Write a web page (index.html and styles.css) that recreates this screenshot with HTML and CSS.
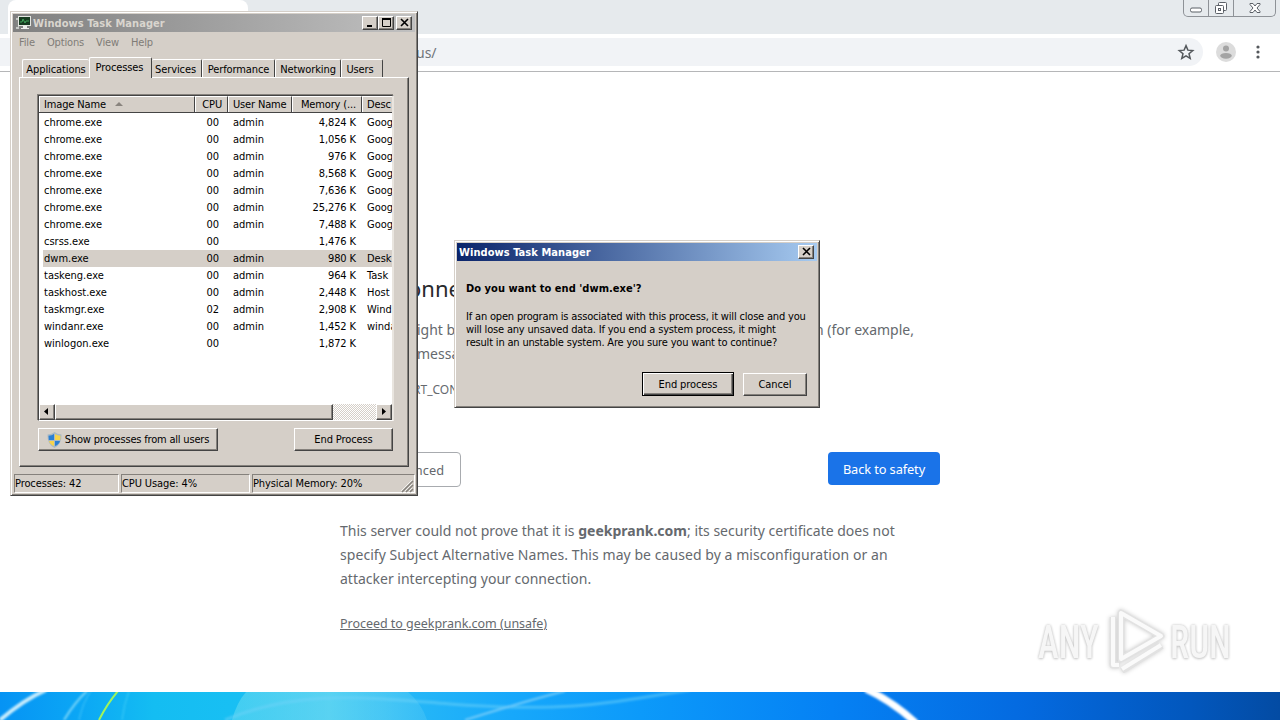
FILE: index.html
```
<!DOCTYPE html>
<html lang="en">
<head>
    <meta charset="UTF-8">
    <title>Windows Task Manager</title>
    <link rel="stylesheet" href="styles.css">
</head>
<body>
    <div class="browser">
        <div class="tab-strip">
            <div class="browser-tab"></div>
            <div class="window-controls">
                <span class="control"><svg width="14" height="8" viewBox="0 0 14 8"><rect x="1.5" y="2" width="11" height="4" rx="1.5" fill="#fff" stroke="#5b6067"/></svg></span>
                <span class="control"><svg width="14" height="14" viewBox="0 0 14 14" fill="#fff" stroke="#5b6067"><rect x="4.500" y="1.500" width="8" height="8" rx="1"/><rect x="1.500" y="4.500" width="8" height="8" rx="1"/><rect x="4.500" y="7.500" width="2" height="2"/></svg></span>
                <span class="control wide"><svg width="14" height="12" viewBox="0 0 14 12"><path d="M2 1.500h3l2 2.500 2-2.500h3v1L9 6l3 3.500v1H9L7 8l-2 2.500H2v-1L5 6 2 2.500z" fill="#fff" stroke="#5b6067"/></svg></span>
            </div>
        </div>
        <div class="toolbar">
            <div class="address-bar">
                <span>us/</span>
                <svg width="18" height="18" viewBox="0 0 24 24"><path d="M12 3.500l2.500 6 6.500.5-5 4.200 1.600 6.300L12 17.100l-5.600 3.400L8 14.200 3 10l6.500-.5z" fill="none" stroke="#54585c" stroke-width="2"/></svg>
            </div>
            <svg class="avatar" width="20" height="20" viewBox="0 0 20 20"><circle cx="10" cy="10" r="10" fill="#dcdcdc"/><circle cx="10" cy="6.500" r="3" fill="#a3a3a3"/><ellipse cx="10" cy="13.800" rx="5.800" ry="2.900" fill="#a3a3a3"/></svg>
            <svg width="4" height="14" viewBox="0 0 4 14" fill="#55585c"><circle cx="2" cy="2" r="1.600"/><circle cx="2" cy="7" r="1.600"/><circle cx="2" cy="12" r="1.600"/></svg>
        </div>
        <div class="page">
            <h1>onne</h1>
            <div class="warning"><span>ight b</span><span class="rest">n (for example,</span></div>
            <div class="warning">messa</div>
            <div class="error-code">RT_CON</div>
            <div class="actions">
                <div class="details-btn">nced</div>
                <div class="safety-btn">Back to safety</div>
            </div>
            <p class="explain">
                <span>This server could not prove that it is <b>geekprank.com</b>; its security certificate does not</span><br>
                <span class="wider">specify Subject Alternative Names. This may be caused by a misconfiguration or an</span><br>
                <span>attacker intercepting your connection.</span>
            </p>
            <a class="proceed">Proceed to geekprank.com (unsafe)</a>
        </div>
        <svg class="wallpaper" width="1280" height="28" viewBox="0 0 1280 28">
            <defs>
                <linearGradient id="sky" x1="0" x2="1" y1="0" y2="0">
                    <stop offset="0" stop-color="#0693f4"/>
                    <stop offset=".06" stop-color="#0ba6f5"/>
                    <stop offset=".12" stop-color="#14bdf2"/>
                    <stop offset=".18" stop-color="#18bff3"/>
                    <stop offset=".3" stop-color="#29bbf6"/>
                    <stop offset=".4" stop-color="#17a8fb"/>
                    <stop offset=".5" stop-color="#0c9afa"/>
                    <stop offset=".65" stop-color="#0581f4"/>
                    <stop offset=".8" stop-color="#046ae0"/>
                    <stop offset=".93" stop-color="#0257bd"/>
                    <stop offset="1" stop-color="#034ba3"/>
                </linearGradient>
                <linearGradient id="orb" x1="0" x2="1" y1="0" y2="0">
                    <stop offset="0" stop-color="#8fe8ef" stop-opacity=".35"/>
                    <stop offset=".5" stop-color="#8fe8ef" stop-opacity=".5"/>
                    <stop offset="1" stop-color="#6fd4f5" stop-opacity=".25"/>
                </linearGradient>
                <filter id="soft" x="-20%" y="-40%" width="140%" height="180%"><feGaussianBlur stdDeviation=".8"/></filter>
            </defs>
            <rect width="1280" height="28" fill="url(#sky)"/>
            <path d="M232 28Q237 10 246 0H408Q422 12 427 28z" fill="url(#orb)"/>
            <g fill="none" filter="url(#soft)">
                <path d="M0 28Q25 7 46-2" stroke="#c9edfd" stroke-width="4"/>
                <path d="M64 28Q75 10 87-1" stroke="#78d5f9" stroke-width="2"/>
                <path d="M79 28Q83 10 91-1" stroke="#42c5f8"/>
                <path d="M122 28Q124 12 129-1" stroke="#40cdf8"/>
                <path d="M225 28C300-4 370 6 450 12S580 16 640 6L690-2" stroke="#72d4fa" stroke-width="3" opacity=".5"/>
                <path d="M465 28C500 17 530 8 565-1" stroke="#6fcafa" stroke-width="2"/>
            </g>
            <path d="M99 28Q107 12 118-1" fill="none" stroke="#a0f45c" stroke-width="2"/>
            <path d="M866-3Q892 9 916 31" fill="none" stroke="#fff" stroke-width="7" filter="url(#soft)"/>
        </svg>
    </div>

    <div class="watermark">
        <span class="any">ANY</span>
        <svg width="60" height="64" viewBox="0 0 60 64" fill="none" stroke-linejoin="round">
            <path d="M7 8v48h6M15 4v46l40-23z" stroke="#e2e2e2" stroke-width="7"/>
            <path d="M16 62l40-25" stroke="#e2e2e2" stroke-width="6"/>
            <path d="M7 8v48h6M15 4v46l40-23zM16 60l39-24" stroke="#fafafa" stroke-width="4"/>
        </svg>
        <span class="run">RUN</span>
    </div>

    <div class="window task-manager">
        <div class="title-bar inactive">
            <svg width="17" height="16" viewBox="0 0 17 16"><path d="M1 3h3v11H1z" fill="#c5c8c5"/><path d="M2 5v7" stroke="#444"/><rect x="3.500" y="1.500" width="12" height="9" fill="#173b20" stroke="#e5e7e2"/><path d="M5 7h2l1-3 2 4 1-2h3" stroke="#42a45b" fill="none"/><path d="M8 11h4v2h2v1H6v-1h2z" fill="#f0f0ed"/></svg>
            <span class="title">Windows Task Manager</span>
            <span class="caption-btn"><svg width="10" height="10"><path d="M1 8h5" stroke="#000" stroke-width="2"/></svg></span>
            <span class="caption-btn"><svg width="10" height="10"><path d="M.5 1v7.500h8V1M0 1h9" fill="none" stroke="#000"/><path d="M0 1h9" stroke="#000" stroke-width="2"/></svg></span>
            <span class="caption-btn close"><svg width="10" height="10"><path d="M1 1l7 7M8 1L1 8" stroke="#000" stroke-width="1.600"/></svg></span>
        </div>
        <div class="menu"><span>File</span><span>Options</span><span>View</span><span>Help</span></div>
        <div class="tabs">
            <div class="tab t-apps">Applications</div>
            <div class="tab t-proc active">Processes</div>
            <div class="tab t-serv">Services</div>
            <div class="tab t-perf">Performance</div>
            <div class="tab t-net">Networking</div>
            <div class="tab t-users">Users</div>
        </div>
        <div class="panel">
            <div class="list">
                <div class="row head"><span>Image Name<i class="sort"></i></span><span>CPU</span><span>User Name</span><span>Memory (...</span><span>Desc</span></div>
                <div class="rows" id="rows"></div>
                <div class="scrollbar">
                    <span class="arrow"><svg width="5" height="8"><path d="M4 0v7L0 3.500z"/></svg></span>
                    <span class="thumb"></span>
                    <span class="track"></span>
                    <span class="arrow"><svg width="5" height="8"><path d="M1 0v7l4-3.500z"/></svg></span>
                </div>
            </div>
            <div class="panel-buttons">
                <div class="btn all-users">
                    <svg width="15" height="16" viewBox="0 0 15 16"><path d="M7.500 0Q10 2 14.500 2.500 15 12 7.500 16 0 12 .5 2.500 5 2 7.500 0z" fill="#a9b9c4"/><path d="M7 2v6H1.800L1.500 3.700Q5 3.500 7 2z" fill="#2b7fd3"/><path d="M8 2v6h5.200l.3-4.300Q10 3.500 8 2z" fill="#f7d34b"/><path d="M7 14V9H2q1 3.500 5 5z" fill="#f7d34b"/><path d="M8 14V9h5q-1 3.500-5 5z" fill="#2b7fd3"/></svg>
                    <span>Show processes from all users</span>
                </div>
                <div class="btn end">End Process</div>
            </div>
        </div>
        <div class="status">
            <span class="s1">Processes: 42</span><span class="s2">CPU Usage: 4%</span><span class="s3">Physical Memory: 20%</span>
            <svg class="grip" width="13" height="13"><path d="M1 12L12 1M5 12l7-7M9 12l3-3" stroke="#85817c" stroke-width="1.500"/><path d="M0 11L11 0M4 11l7-7M8 11l3-3" stroke="#fff" stroke-width=".7"/></svg>
        </div>
    </div>

    <div class="window dialog">
        <div class="title-bar">
            <span class="title">Windows Task Manager</span>
            <span class="caption-btn close"><svg width="10" height="10"><path d="M1 1l7 7M8 1L1 8" stroke="#000" stroke-width="1.600"/></svg></span>
        </div>
        <div class="dialog-body">
            <div class="question">Do you want to end 'dwm.exe'?</div>
            <div class="message">
                If an open program is associated with this process, it will close and you<br>
                will lose any unsaved data. If you end a system process, it might<br>
                result in an unstable system. Are you sure you want to continue?
            </div>
            <div class="dialog-buttons">
                <div class="btn default">End process</div>
                <div class="btn cancel">Cancel</div>
            </div>
        </div>
    </div>

    <script src="script.js"></script>
</body>
</html>
```
FILE: styles.css
```
* {
    box-sizing: border-box;
}
body {
    margin: 0;
    width: 1280px;
    height: 720px;
    overflow: hidden;
    position: relative;
    font-family: "DejaVu Sans Condensed", "DejaVu Sans", sans-serif;
    font-stretch: condensed;
    font-size: 11px;
    color: #000;
    white-space: nowrap;
}
svg {
    display: block;
    flex: none;
}

/* browser */
.browser {
    height: 720px;
    display: flex;
    flex-direction: column;
    font-family: "Noto Sans", sans-serif;
    font-stretch: normal;
    color: #65696e;
}
.tab-strip {
    height: 34px;
    flex: none;
    display: flex;
    justify-content: space-between;
    background: #e6eaed;
    padding: 0 4px 0 8px;
}
.browser-tab {
    width: 240px;
    background: #fff;
    border-radius: 8px 8px 0 0;
}
.window-controls {
    display: flex;
    height: 17px;
    border: 1px solid #8e9297;
    border-top: none;
    border-radius: 0 0 5px 5px;
}
.control {
    width: 25px;
    display: flex;
    align-items: center;
    justify-content: center;
    border-right: 1px solid #8e9297;
}
.control:first-child {
    padding-top: 4px;
}
.control.wide {
    width: 41px;
    border-right: none;
}
.toolbar {
    height: 38px;
    flex: none;
    display: flex;
    align-items: center;
    padding: 0 20px 1px 0;
    background: #fff;
    border-bottom: 1px solid #b5b6b8;
}
.address-bar {
    width: 1203px;
    flex: none;
    height: 28px;
    padding: 0 8px 0 416px;
    display: flex;
    align-items: center;
    justify-content: space-between;
    background: #f1f3f6;
    border-radius: 0 14px 14px 0;
    font-size: 14px;
    color: #70757a;
}
.avatar {
    margin: 0 20px 0 13px;
}
.page {
    height: 620px;
    flex: none;
    padding: 199px 340px 0;
    background: #fff;
    font-size: 14px;
}
.page h1 {
    margin: 0 0 13px 68px;
    font-size: 22px;
    font-weight: 400;
    line-height: 34px;
    color: #28292c;
}
.warning {
    display: flex;
    padding-left: 77px;
    line-height: 24px;
}
.rest {
    margin-left: auto;
    margin-right: 26px;
}
.error-code {
    padding-left: 73px;
    margin-top: 12px;
    font-size: 12px;
    line-height: 24px;
}
.actions {
    display: flex;
    justify-content: space-between;
    margin-top: 50px;
    font-size: 12.800px;
}
.details-btn {
    width: 121px;
    height: 35px;
    padding-right: 16px;
    line-height: 35px;
    text-align: right;
    border: 1px solid #a8abaf;
    border-radius: 4px;
}
.safety-btn {
    width: 112px;
    height: 33px;
    line-height: 34px;
    letter-spacing: -.1px;
    text-align: center;
    background: #1a73e8;
    color: #fff;
    border-radius: 4px;
}
.explain {
    margin: 32px 0 21px;
    line-height: 24px;
}
.wider {
    letter-spacing: .06px;
}
.proceed {
    font-size: 12.500px;
    line-height: 24px;
    letter-spacing: -.03px;
    text-decoration: underline;
}
.watermark {
    position: absolute;
    left: 1038px;
    top: 609px;
    display: flex;
    align-items: center;
    gap: 4px;
    font-family: "Roboto", sans-serif;
    font-size: 47px;
    font-weight: 500;
    color: #f6f6f6;
    text-shadow: 0 0 3px #c4c4c4, 0 1px 3px #ccc;
}
.watermark span {
    width: 64px;
    transform: scaleX(.75);
    transform-origin: left;
}
.watermark svg {
    filter: drop-shadow(0 0 2px #ccc);
}

/* classic windows */
.window {
    position: absolute;
    background: #d5cfc8;
    border: 1px solid #d5cfc8;
    border-right-color: #444;
    border-bottom-color: #444;
    box-shadow: inset 1px 1px #fff, inset -1px -1px #85817c;
    padding: 2px;
}
.title-bar {
    height: 18px;
    display: flex;
    align-items: center;
    padding: 0 3px 0 2px;
    background: linear-gradient(90deg, #0a246a, #a6caf0);
    color: #fff;
    font-weight: bold;
    letter-spacing: .06px;
}
.title-bar.inactive {
    background: linear-gradient(90deg, #808080, #c0c0c0);
    color: #d9d5ce;
}
.title {
    margin-right: auto;
}
.caption-btn {
    width: 16px;
    height: 14px;
    padding: 2px 0 0 3px;
    background: #d5cfc8;
    border: 1px solid #fff;
    border-right-color: #444;
    border-bottom-color: #444;
    box-shadow: inset -1px -1px #85817c;
}
.caption-btn svg {
    margin-top: -1px;
}
.caption-btn.close {
    margin-left: 2px;
}
.btn {
    height: 23px;
    display: flex;
    align-items: center;
    justify-content: center;
    letter-spacing: -.1px;
    border: 1px solid #fff;
    border-right-color: #444;
    border-bottom-color: #444;
    box-shadow: inset -1px -1px #85817c;
}

.task-manager {
    left: 10px;
    top: 11px;
    width: 408px;
    height: 485px;
}
.task-manager .title {
    margin-left: 1px;
}
.menu {
    height: 20px;
    padding-left: 6px;
    display: flex;
    gap: 12px;
    line-height: 21px;
    letter-spacing: -.15px;
    color: #807c77;
}
.tabs {
    height: 25px;
    padding-left: 9px;
    display: flex;
    align-items: flex-end;
}
.tab {
    height: 18px;
    line-height: 19px;
    text-align: center;
    letter-spacing: -.1px;
    border-left: 1px solid #fff;
    border-top: 1px solid #fff;
    border-right: 1px solid #444;
    border-radius: 2px 2px 0 0;
}
.tab.active {
    height: 21px;
    line-height: 19px;
    margin-bottom: -1px;
    background: #d5cfc8;
    position: relative;
}
.t-apps {
    width: 67px;
    border-right: none;
}
.t-proc {
    width: 63px;
    padding-right: 2px;
}
.t-serv {
    width: 50px;
    padding-right: 2px;
    border-left: none;
}
.t-perf {
    width: 73px;
}
.t-net {
    width: 66px;
}
.t-users {
    width: 42px;
    padding-right: 4px;
}
.panel {
    width: 390px;
    height: 390px;
    margin-left: 6px;
    padding: 17px 15px 0 18px;
    border: 1px solid #fff;
    border-right-color: #444;
    border-bottom-color: #444;
    box-shadow: inset -1px -1px #85817c;
}
.list {
    width: 356px;
    height: 326px;
    background: #fff;
    border: 1px solid #444;
    border-right: 2px solid #e9e5df;
    border-bottom-color: #fff;
    box-shadow: -1px -1px #85817c;
    overflow: hidden;
}
.row {
    height: 17px;
    line-height: 17px;
    display: grid;
    grid-template-columns: 156px 33px 64px 70px 30px;
}
.row span {
    overflow: hidden;
    padding-left: 5px;
}
.row span:nth-child(2) {
    text-align: right;
    padding-right: 9px;
}
.row span:nth-child(4) {
    text-align: right;
    padding-right: 6px;
    letter-spacing: -.1px;
}
.row.selected {
    background: linear-gradient(90deg, #fff 4px, #d5cfc8 4px);
}
.row.head {
    background: #d5cfc8;
    border-bottom: 1px solid #444;
}
.row.head span {
    border-left: 1px solid #fff;
    border-top: 1px solid #fff;
    border-right: 1px solid #444;
    padding-left: 4px;
    line-height: 16px;
    letter-spacing: -.15px;
}
.row.head span:last-child {
    border-right: none;
}
.row.head span:nth-child(2), .row.head span:nth-child(4) {
    padding-right: 5px;
}
.sort {
    display: inline-block;
    margin-left: 9px;
    border: 4px solid transparent;
    border-top: none;
    border-bottom-color: #89847e;
    vertical-align: 2px;
}
.rows {
    height: 291px;
    padding-top: 1px;
}
.scrollbar {
    height: 16px;
    display: flex;
    background: #ebe8e4;
}
.arrow, .thumb {
    background: #d5cfc8;
    border: 1px solid #fff;
    border-right-color: #444;
    border-bottom-color: #444;
    box-shadow: inset -1px -1px #85817c;
}
.arrow {
    width: 16px;
    padding: 3px 0 0 4px;
}
.thumb {
    width: 278px;
}
.track {
    flex: 1;
    background: repeating-conic-gradient(#fff 0 25%, #d5cfc8 0 50%) 0 0 / 2px 2px;
}
.panel-buttons {
    display: flex;
    justify-content: space-between;
    margin-top: 7px;
}
.all-users {
    width: 180px;
    gap: 3px;
    letter-spacing: -.19px;
}
.end {
    width: 99px;
}
.status {
    height: 19px;
    margin-top: 7px;
    padding-left: 1px;
    display: flex;
    gap: 2px;
    line-height: 17px;
    letter-spacing: -.1px;
    position: relative;
}
.status span {
    border: 1px solid #85817c;
    border-right-color: #fff;
    border-bottom-color: #fff;
}
.s1 {
    width: 105px;
}
.s2 {
    width: 129px;
}
.s3 {
    flex: 1;
}
.grip {
    position: absolute;
    right: 1px;
    bottom: 0;
}

.dialog {
    left: 454px;
    top: 240px;
    width: 366px;
    height: 168px;
}
.dialog-body {
    padding: 21px 10px 0 9px;
}
.question {
    font-weight: bold;
    line-height: 14px;
    letter-spacing: .04px;
}
.message {
    margin-top: 14px;
    line-height: 13px;
    letter-spacing: -.18px;
}
.dialog-buttons {
    display: flex;
    justify-content: flex-end;
    align-items: center;
    gap: 9px;
    margin-top: 23px;
}
.default {
    width: 92px;
    height: 24px;
    border: 1px solid #000;
    box-shadow: inset 1px 1px #fff, inset -1px -1px #444, inset -2px -2px #85817c;
}
.cancel {
    width: 64px;
}
```
FILE: script.js
```
const processes = [
    ['chrome.exe', '00', 'admin', '4,824 K', 'Goog'],
    ['chrome.exe', '00', 'admin', '1,056 K', 'Goog'],
    ['chrome.exe', '00', 'admin', '976 K', 'Goog'],
    ['chrome.exe', '00', 'admin', '8,568 K', 'Goog'],
    ['chrome.exe', '00', 'admin', '7,636 K', 'Goog'],
    ['chrome.exe', '00', 'admin', '25,276 K', 'Goog'],
    ['chrome.exe', '00', 'admin', '7,488 K', 'Goog'],
    ['csrss.exe', '00', '', '1,476 K', ''],
    ['dwm.exe', '00', 'admin', '980 K', 'Desk'],
    ['taskeng.exe', '00', 'admin', '964 K', 'Task'],
    ['taskhost.exe', '00', 'admin', '2,448 K', 'Host'],
    ['taskmgr.exe', '02', 'admin', '2,908 K', 'Wind'],
    ['windanr.exe', '00', 'admin', '1,452 K', 'winda'],
    ['winlogon.exe', '00', '', '1,872 K', '']
];

const rows = document.getElementById('rows');
processes.forEach(process => {
    const row = document.createElement('div');
    row.className = process[0] === 'dwm.exe' ? 'row selected' : 'row';
    process.forEach(value => {
        const cell = document.createElement('span');
        cell.textContent = value;
        row.appendChild(cell);
    });
    rows.appendChild(row);
});
```
